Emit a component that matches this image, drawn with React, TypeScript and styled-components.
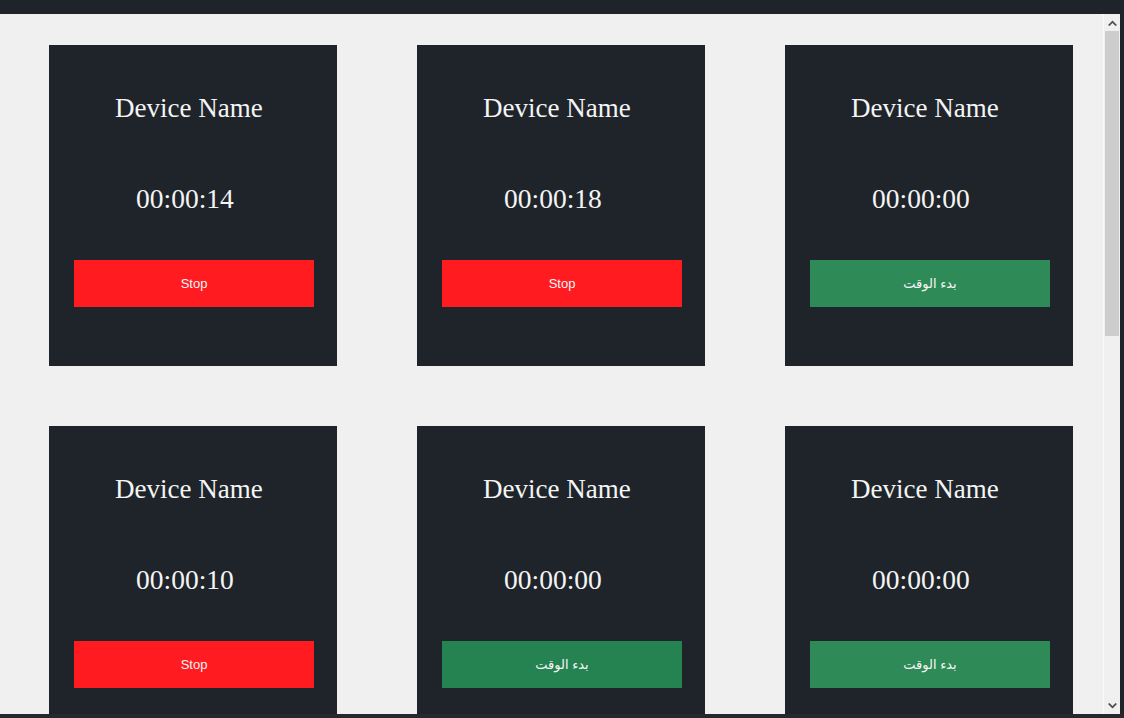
import styled, { createGlobalStyle } from 'styled-components'

const GlobalStyle = createGlobalStyle`
  html, body {
    margin: 0;
    padding: 0;
    height: 718px;
    overflow: hidden;
    background: #1f232a;
  }
`

type Device = { name: string; time: string; running: boolean; dim?: boolean }

const devices: Device[] = [
  { name: 'Device Name', time: '00:00:14', running: true },
  { name: 'Device Name', time: '00:00:18', running: true },
  { name: 'Device Name', time: '00:00:00', running: false },
  { name: 'Device Name', time: '00:00:10', running: true },
  { name: 'Device Name', time: '00:00:00', running: false, dim: true },
  { name: 'Device Name', time: '00:00:00', running: false },
]

const Frame = styled.div`
  display: flex;
  flex-direction: column;
  width: 1124px;
  height: 718px;
  background: #1f232a;
`

const TopBar = styled.div`
  height: 14px;
  flex: none;
  background: #1f232a;
`

const Middle = styled.div`
  display: flex;
  height: 700px;
  flex: none;
`

const Viewport = styled.main`
  width: 1103px;
  flex: none;
  overflow: hidden;
  background: #f0f0f0;
  border-right: 1px solid #fafafa;
`

const Grid = styled.div`
  display: grid;
  grid-template-columns: repeat(3, 288px);
  column-gap: 80px;
  row-gap: 60px;
  padding: 31px 0 0 49px;
`

const Card = styled.section`
  display: flex;
  flex-direction: column;
  height: 321px;
  box-sizing: border-box;
  padding-top: 47px;
  background: #1f242a;
  color: #f4f4f4;
`

const Name = styled.h2`
  margin: 0;
  padding-left: 66px;
  font-family: 'Liberation Serif', 'DejaVu Serif', serif;
  font-weight: 400;
  font-size: 27px;
  line-height: 32px;
  white-space: nowrap;
`

const Timer = styled.div`
  margin-top: 60px;
  padding-left: 87px;
  font-family: 'Liberation Serif', 'DejaVu Serif', serif;
  font-size: 27.5px;
  line-height: 30px;
  white-space: nowrap;
`

const ActionButton = styled.button<{ $stop: boolean; $dim?: boolean }>`
  display: flex;
  align-items: center;
  justify-content: center;
  margin: 46px 0 0 25px;
  width: 240px;
  height: 47px;
  padding: 0;
  border: none;
  background: ${(p) => (p.$stop ? '#ff1b20' : p.$dim ? '#258251' : '#2e8b57')};
  color: #f6f6f6;
  font-family: 'Liberation Sans', 'DejaVu Sans', sans-serif;
  font-size: 13px;
  cursor: pointer;
`

const Scrollbar = styled.div`
  display: flex;
  flex-direction: column;
  width: 16px;
  flex: none;
  background: #f0f0f0;
`

const ArrowButton = styled.div`
  display: flex;
  align-items: center;
  justify-content: center;
  height: 17px;
  flex: none;
`

const Thumb = styled.div`
  height: 305px;
  flex: none;
  margin: 0 1px;
  background: #cdcdcd;
`

const Track = styled.div`
  flex: 1;
`

const RightEdge = styled.div`
  width: 4px;
  flex: none;
  background: #1f232a;
`

const BottomBar = styled.div`
  height: 4px;
  flex: none;
  background: #25292e;
`

const Chevron = ({ up }: { up?: boolean }) => (
  <svg width="9" height="6" viewBox="0 0 9 6">
    <path
      d={up ? 'M0 5 L4.5 0.5 L9 5 L7.5 6 L4.5 3 L1.5 6 Z' : 'M0 1 L4.5 5.5 L9 1 L7.5 0 L4.5 3 L1.5 0 Z'}
      fill="#505050"
    />
  </svg>
)

export default function App() {
  return (
    <>
      <GlobalStyle />
      <Frame>
        <TopBar />
        <Middle>
          <Viewport>
            <Grid>
              {devices.map((d, i) => (
                <Card key={i}>
                  <Name>{d.name}</Name>
                  <Timer>{d.time}</Timer>
                  <ActionButton $stop={d.running} $dim={d.dim}>
                    {d.running ? 'Stop' : 'بدء الوقت'}
                  </ActionButton>
                </Card>
              ))}
            </Grid>
          </Viewport>
          <Scrollbar>
            <ArrowButton>
              <Chevron up />
            </ArrowButton>
            <Thumb />
            <Track />
            <ArrowButton>
              <Chevron />
            </ArrowButton>
          </Scrollbar>
          <RightEdge />
        </Middle>
        <BottomBar />
      </Frame>
    </>
  )
}
